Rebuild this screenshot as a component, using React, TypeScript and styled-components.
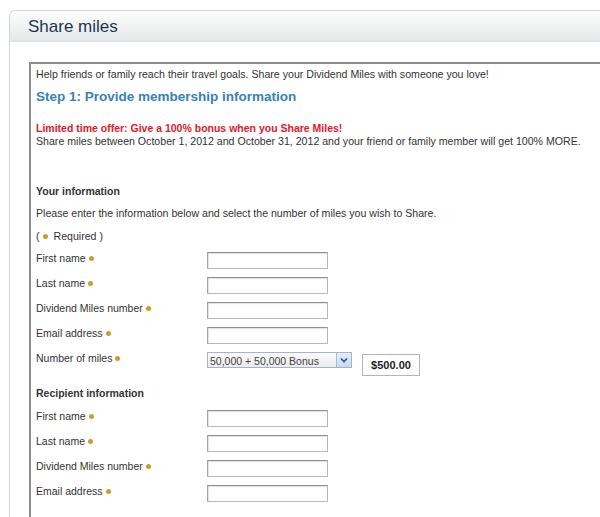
import React from "react";
import styled, { createGlobalStyle } from "styled-components";

const Global = createGlobalStyle`
  html, body { margin: 0; padding: 0; background: #ffffff; overflow: hidden; }
  body { font-family: "Liberation Sans", Arial, sans-serif; color: #333333; }
`;

const Page = styled.div`
  padding: 10px 0 0 9px;
  width: 640px;
  height: 517px;
  box-sizing: border-box;
`;

const Panel = styled.section`
  border: 1px solid #d4d6d6;
  border-right: none;
  border-radius: 6px 0 0 0;
  height: 600px;
  background: #ffffff;
`;

const Header = styled.header`
  height: 31px;
  display: flex;
  align-items: center;
  padding: 1px 0 0 18px;
  box-sizing: border-box;
  border-radius: 6px 0 0 0;
  background: linear-gradient(#fdfdfd 0%, #f1f3f3 50%, #e4e7e7 100%);
  border-bottom: 1px solid #dfe2e2;
`;

const Title = styled.h1`
  margin: 0;
  font-size: 17px;
  font-weight: normal;
  color: #1c3556;
`;

const Body = styled.div`
  padding: 20px 0 0 19px;
`;

const Inner = styled.div`
  border-top: 2px solid #8c8c8c;
  border-left: 2px solid #8c8c8c;
  padding: 4px 0 0 5px;
  height: 600px;
  font-size: 10.5px;
  line-height: 13px;
`;

const Text = styled.p<{ $mt?: number }>`
  margin: ${(p) => p.$mt ?? 0}px 0 0 0;
  font-size: 10.6px;
  line-height: 13px;
  color: #333333;
`;

const StepTitle = styled.h2`
  margin: 7px 0 0 0;
  font-size: 13.5px;
  line-height: 17px;
  font-weight: bold;
  color: #3682ba;
`;

const Offer = styled.p`
  margin: 17px 0 0 0;
  font-size: 10.5px;
  line-height: 13px;
  font-weight: bold;
  color: #e3172b;
`;

const SectionTitle = styled.h3<{ $mt: number }>`
  margin: ${(p) => p.$mt}px 0 0 0;
  font-size: 10.5px;
  line-height: 13px;
  font-weight: bold;
  color: #333333;
`;

const Dot = styled.span`
  display: inline-block;
  width: 5px;
  height: 5px;
  border-radius: 50%;
  background: #cf9b2e;
  vertical-align: middle;
  margin: 0 3px 1px 3px;
`;

const Form = styled.div<{ $mt?: number }>`
  margin-top: ${(p) => p.$mt ?? 3}px;
  display: flex;
  flex-direction: column;
`;

const Row = styled.div<{ $h?: number }>`
  display: flex;
  align-items: flex-start;
  height: ${(p) => p.$h ?? 25}px;
  padding-top: 6px;
  box-sizing: border-box;
`;

const Label = styled.label`
  width: 171px;
  flex: none;
  font-size: 10.5px;
  line-height: 13px;
  color: #333333;
`;

const Input = styled.input`
  width: 121px;
  height: 17px;
  box-sizing: border-box;
  margin: 0;
  border: 1px solid #b8b8b8;
  border-top-color: #8f8f8f;
  border-left-color: #a5a5a5;
  box-shadow: inset 1px 1px 1px rgba(0, 0, 0, 0.12);
  background: #ffffff;
  padding: 0 3px;
  font-family: "Liberation Sans", Arial, sans-serif;
  font-size: 11px;
`;

const SelectWrap = styled.div`
  position: relative;
  width: 145px;
  height: 16px;
  flex: none;
`;

const Select = styled.select`
  appearance: none;
  -webkit-appearance: none;
  width: 100%;
  height: 100%;
  margin: 0;
  box-sizing: border-box;
  border: 1px solid #a9b4c0;
  background: linear-gradient(#fafafa, #ececec);
  padding: 2px 0 0 2px;
  font-family: "Liberation Sans", Arial, sans-serif;
  font-size: 10.5px;
  color: #444444;
  border-radius: 0;
`;

const Arrow = styled.span`
  position: absolute;
  top: 1px;
  right: 1px;
  width: 14px;
  height: 14px;
  background: linear-gradient(#e6effa, #c8daf0);
  border-left: 1px solid #a7bcd6;
  display: flex;
  align-items: center;
  justify-content: center;
  pointer-events: none;
`;

const Amount = styled.div`
  margin: 2px 0 0 10px;
  width: 58px;
  height: 22px;
  box-sizing: border-box;
  border: 1px solid #b5b5b5;
  display: flex;
  align-items: center;
  justify-content: center;
  font-size: 11px;
  font-weight: bold;
  color: #222222;
`;

const fields = ["First name", "Last name", "Dividend Miles number", "Email address"];

function Field({ label }: { label: string }) {
  return (
    <Row>
      <Label>
        {label}
        <Dot />
      </Label>
      <Input type="text" />
    </Row>
  );
}

export default function App() {
  return (
    <>
      <Global />
      <Page>
        <Panel>
          <Header>
            <Title>Share miles</Title>
          </Header>
          <Body>
            <Inner>
              <Text>
                Help friends or family reach their travel goals. Share your Dividend Miles with someone you love!
              </Text>
              <StepTitle>Step 1: Provide membership information</StepTitle>
              <Offer>Limited time offer: Give a 100% bonus when you Share Miles!</Offer>
              <Text>
                Share miles between October 1, 2012 and October 31, 2012 and your friend or family member will get
                100% MORE.
              </Text>
              <SectionTitle $mt={37}>Your information</SectionTitle>
              <Text $mt={9}>Please enter the information below and select the number of miles you wish to Share.</Text>
              <Text $mt={10}>
                (<Dot /> Required )
              </Text>
              <Form>
                {fields.map((f) => (
                  <Field key={"y" + f} label={f} />
                ))}
                <Row $h={31}>
                  <Label>
                    Number of miles
                    <Dot />
                  </Label>
                  <SelectWrap>
                    <Select defaultValue="50000">
                      <option value="50000">50,000 + 50,000 Bonus</option>
                    </Select>
                    <Arrow>
                      <svg width="8" height="6" viewBox="0 0 8 6">
                        <path d="M1 1.5 L4 4.5 L7 1.5" fill="none" stroke="#2c4f86" strokeWidth="1.6" />
                      </svg>
                    </Arrow>
                  </SelectWrap>
                  <Amount>$500.00</Amount>
                </Row>
              </Form>
              <SectionTitle $mt={10}>Recipient information</SectionTitle>
              <Form $mt={4}>
                {fields.map((f) => (
                  <Field key={"r" + f} label={f} />
                ))}
              </Form>
            </Inner>
          </Body>
        </Panel>
      </Page>
    </>
  );
}
